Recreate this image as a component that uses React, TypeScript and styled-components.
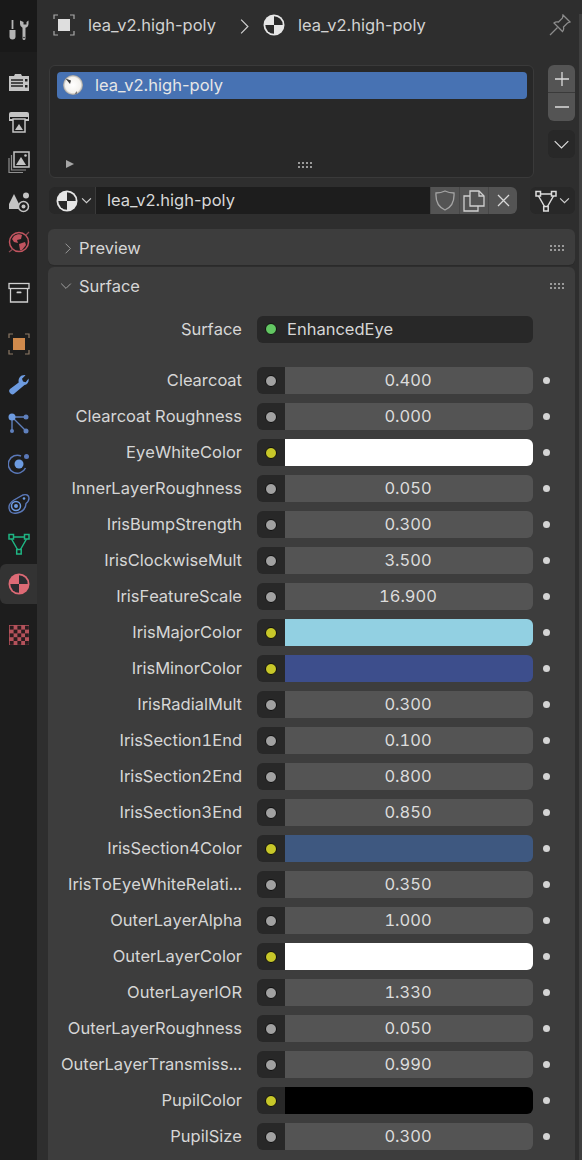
import { ReactNode } from 'react'
import styled, { createGlobalStyle } from 'styled-components'

const GlobalStyle = createGlobalStyle`
  html, body {
    margin: 0;
    padding: 0;
    background: #2e2e2e;
  }
  body {
    font-family: Inter, "Noto Sans", sans-serif;
    color: #d6d6d6;
  }
`

const MaterialBall = ({ size = 22, tint = '#e6e6e6', dark = '#2a2a2a' }: { size?: number; tint?: string; dark?: string }) => (
  <svg width={size} height={size} viewBox="0 0 22 22">
    <circle cx="11" cy="11" r="10.500" fill={tint} />
    <path d="M11 2.300a8.700 8.700 0 0 1 8.700 8.700H11z" fill={dark} />
    <path d="M11 19.700A8.700 8.700 0 0 1 2.300 11H11z" fill={dark} />
  </svg>
)

const ObjectIcon = ({ color = '#a8a8a8', fill = '#dedede' }: { color?: string; fill?: string }) => (
  <svg width="22" height="22" viewBox="0 0 22 22" fill="none" stroke={color} strokeWidth="1.2">
    <path d="M1 5V1h4M17 1h4v4M21 17v4h-4M5 21H1v-4" />
    <rect x="5" y="5" width="12" height="12" fill={fill} stroke="none" />
  </svg>
)

const MeshIcon = ({ color }: { color: string }) => (
  <svg width="22" height="22" viewBox="0 0 22 22" fill="none" stroke={color} strokeWidth="1.500">
    <path d="M5.500 4h11M3.500 6 9.500 16.500M18.500 6 12.500 16.500" />
    <rect x="1" y="1.500" width="4.500" height="4.500" />
    <rect x="16.500" y="1.500" width="4.500" height="4.500" />
    <rect x="8.700" y="16.500" width="4.500" height="4.500" />
  </svg>
)

const Handle = styled.div`
  display: grid;
  grid-template-columns: repeat(4, 2px);
  grid-auto-rows: 2px;
  gap: 2px;
  & > i { background: #9a9a9a; }
`
const GripDots = () => (
  <Handle>
    {Array.from({ length: 8 }).map((_, i) => <i key={i} />)}
  </Handle>
)

const Layout = styled.div`
  display: flex;
  width: 582px;
  height: 1160px;
  overflow: hidden;
  background: #2e2e2e;
`

const Sidebar = styled.nav`
  flex: 0 0 37px;
  background: #1d1d1d;
  display: flex;
  flex-direction: column;
`

const ToolTab = styled.div`
  height: 52px;
  background: #191919;
  display: flex;
  align-items: center;
  justify-content: center;
  padding-top: 8px;
  box-sizing: border-box;
  margin-bottom: 10px;
`

const TabGroup = styled.div`
  display: flex;
  flex-direction: column;
  margin-bottom: 11px;
`

const Tab = styled.div<{ $active?: boolean }>`
  height: 40px;
  display: flex;
  align-items: center;
  justify-content: center;
  background: ${p => (p.$active ? '#333333' : 'transparent')};
  border-radius: ${p => (p.$active ? '6px 0 0 6px' : '0')};
`

const Main = styled.main`
  flex: 1;
  min-width: 0;
  position: relative;
  padding: 0 4px 0 11px;
`

const Scrollbar = styled.div`
  position: absolute;
  top: 14px;
  right: 0;
  bottom: 0;
  width: 3px;
  background: #3f3f3f;
`

const Breadcrumb = styled.header`
  height: 50px;
  display: flex;
  align-items: center;
  padding-left: 5px;
  margin-bottom: 15px;
`

const CrumbText = styled.span`
  font-size: 16.5px;
  color: #d2d2d2;
  margin-left: 13px;
`

const CrumbChevron = styled.span`
  margin: 2px 10px 0 20px;
  display: flex;
`

const Pin = styled.span`
  margin-left: auto;
  margin-right: 7px;
  display: flex;
`

const SlotRow = styled.section`
  display: flex;
  gap: 14px;
  padding-left: 1px;
  margin-bottom: 9px;
`

const SlotList = styled.div`
  width: 485px;
  height: 113px;
  box-sizing: border-box;
  background: #282828;
  border: 1px solid #3a3a3a;
  border-radius: 6px;
  padding: 6px 6px 6px 7px;
  position: relative;
`

const SlotItem = styled.div`
  height: 27px;
  box-sizing: border-box;
  padding: 0 0 2px 6px;
  background: #4772b3;
  border-radius: 4px;
  display: flex;
  align-items: center;
  gap: 12px;
  font-size: 16.5px;
  color: #e6e6e6;
`

const ExpandArrow = styled.span`
  position: absolute;
  left: 16px;
  bottom: 9px;
  width: 0;
  height: 0;
  border-left: 8px solid #a6a6a6;
  border-top: 4px solid transparent;
  border-bottom: 4px solid transparent;
`

const SlotGrip = styled.div`
  position: absolute;
  left: 248px;
  bottom: 9px;
`

const SlotSide = styled.div`
  display: flex;
  flex-direction: column;
  width: 27px;
`

const SideStack = styled.div`
  border-radius: 6px;
  overflow: hidden;
  margin-bottom: 9px;
`

const SideButton = styled.div<{ $dark?: boolean; $divider?: boolean }>`
  width: 27px;
  height: 28px;
  display: flex;
  align-items: center;
  justify-content: center;
  background: ${p => (p.$dark ? '#282828' : '#545454')};
  border-radius: ${p => (p.$dark ? '6px' : '0')};
  box-sizing: border-box;
  border-bottom: ${p => (p.$divider ? '1px solid #3a3a3a' : 'none')};
`

const DataRow = styled.section`
  display: flex;
  align-items: center;
  height: 27px;
  padding-left: 1px;
  margin-bottom: 15px;
`

const BrowseButton = styled.div`
  width: 46px;
  height: 27px;
  box-sizing: border-box;
  background: #282828;
  border-radius: 6px 0 0 6px;
  display: flex;
  align-items: center;
  padding-left: 7px;
  gap: 3px;
`

const NameField = styled.div`
  width: 335px;
  height: 27px;
  box-sizing: border-box;
  background: #1d1d1d;
  border-left: 1px solid #3a3a3a;
  padding: 0 0 2px 11px;
  display: flex;
  align-items: center;
  font-size: 16.5px;
  color: #d8d8d8;
`

const FieldAction = styled.div<{ $last?: boolean }>`
  width: 29px;
  height: 27px;
  background: #545454;
  display: flex;
  align-items: center;
  justify-content: center;
  border-left: 1px solid #474747;
  box-sizing: border-box;
  border-radius: ${p => (p.$last ? '0 6px 6px 0' : '0')};
`

const MeshSelect = styled.div`
  margin-left: 13px;
  width: 45px;
  height: 27px;
  background: #282828;
  border-radius: 6px;
  display: flex;
  align-items: center;
  justify-content: center;
  gap: 2px;
`

const Panel = styled.section<{ $open?: boolean }>`
  background: #3d3d3d;
  border-radius: ${p => (p.$open ? '6px 6px 0 0' : '6px')};
  margin-bottom: 2px;
  box-shadow: 0 1px 0 #2a2a2a;
  width: 527px;
  height: ${p => (p.$open ? '900px' : 'auto')};
`

const PanelHeader = styled.div`
  height: 36px;
  box-sizing: border-box;
  padding: 2px 11px 0 12px;
  display: flex;
  align-items: center;
  font-size: 16.5px;
  color: #d6d6d6;
  gap: 7px;
  & > :last-child { margin-left: auto; }
`

const HeadChevron = styled.span<{ $closed?: boolean }>`
  width: 12px;
  display: flex;
  justify-content: center;
  padding-left: ${p => (p.$closed ? '2px' : '0')};
  margin-right: ${p => (p.$closed ? '-2px' : '0')};
`

const PropertyRow = styled.div<{ $after?: number }>`
  display: grid;
  grid-template-columns: 209px 28px 248px 27px;
  height: 27px;
  align-items: center;
  margin-bottom: ${p => p.$after ?? 9}px;
`

const PropertyLabel = styled.div`
  font-size: 16.5px;
  font-kerning: none;
  font-variant-numeric: tabular-nums;
  text-align: right;
  white-space: nowrap;
  padding: 0 15px 2px 0;
  color: #d6d6d6;
`

const Socket = styled.div`
  height: 27px;
  background: #282828;
  border-radius: 6px 0 0 6px;
  display: flex;
  align-items: center;
  justify-content: center;
`

const SocketDot = styled.span<{ $color: string }>`
  width: 10px;
  height: 10px;
  border-radius: 50%;
  background: ${p => p.$color};
  border: 1.5px solid #0c0c0c;
`

const ValueField = styled.div`
  height: 27px;
  box-sizing: border-box;
  padding: 0 2px 2px 0;
  background: #545454;
  border-radius: 0 6px 6px 0;
  display: flex;
  align-items: center;
  justify-content: center;
  font-size: 16.5px;
  font-variant-numeric: tabular-nums;
  color: #dcdcdc;
`

const ColorField = styled.div<{ $color: string }>`
  height: 27px;
  background: ${p => p.$color};
  border-radius: 0 6px 6px 0;
`

const Keyframe = styled.span`
  justify-self: center;
  width: 7px;
  height: 7px;
  border-radius: 50%;
  background: #d4d4d4;
`

const SurfaceRow = styled(PropertyRow)`
  margin-top: 13px;
`

const ShaderField = styled.div`
  grid-column: 2 / 4;
  height: 27px;
  box-sizing: border-box;
  background: #282828;
  border-radius: 6px;
  display: flex;
  align-items: center;
  font-size: 16.5px;
  color: #d6d6d6;
  padding: 0 0 1px 8px;
  gap: 10px;
`

const ShaderDot = styled.span`
  width: 12px;
  height: 12px;
  border-radius: 50%;
  background: #63c763;
  border: 1px solid #111;
  box-sizing: border-box;
`

const Chevron = ({ dir = 'down', size = 10, color = '#cfcfcf' }: { dir?: 'down' | 'right'; size?: number; color?: string }) => (
  <svg width={size} height={size} viewBox="0 0 10 10" fill="none" stroke={color} strokeWidth={12 / size}>
    {dir === 'down' ? <path d="M1 3l4 4 4-4" /> : <path d="M3 1l4 4-4 4" />}
  </svg>
)

type Prop = { label: string; value?: string; color?: string }

const properties: Prop[] = [
  { label: 'Clearcoat', value: '0.400' },
  { label: 'Clearcoat Roughness', value: '0.000' },
  { label: 'EyeWhiteColor', color: '#ffffff' },
  { label: 'InnerLayerRoughness', value: '0.050' },
  { label: 'IrisBumpStrength', value: '0.300' },
  { label: 'IrisClockwiseMult', value: '3.500' },
  { label: 'IrisFeatureScale', value: '16.900' },
  { label: 'IrisMajorColor', color: '#92d0e2' },
  { label: 'IrisMinorColor', color: '#3d4e8c' },
  { label: 'IrisRadialMult', value: '0.300' },
  { label: 'IrisSection1End', value: '0.100' },
  { label: 'IrisSection2End', value: '0.800' },
  { label: 'IrisSection3End', value: '0.850' },
  { label: 'IrisSection4Color', color: '#3e5880' },
  { label: 'IrisToEyeWhiteRelati...', value: '0.350' },
  { label: 'OuterLayerAlpha', value: '1.000' },
  { label: 'OuterLayerColor', color: '#ffffff' },
  { label: 'OuterLayerIOR', value: '1.330' },
  { label: 'OuterLayerRoughness', value: '0.050' },
  { label: 'OuterLayerTransmiss...', value: '0.990' },
  { label: 'PupilColor', color: '#000000' },
  { label: 'PupilSize', value: '0.300' },
]

const Svg = ({ children }: { children: ReactNode }) => (
  <svg width="22" height="22" viewBox="0 0 22 22">{children}</svg>
)

const ToolIcon = () => (
  <Svg>
    <rect x="3.600" y="1" width="1.800" height="9" fill="#b4b4b4" />
    <path d="M1.500 11h6v6.500a3 3 0 0 1-6 0z" fill="#b4b4b4" />
    <path d="M12 1.500v3.500a4 4 0 0 0 2.500 3.700V19.500a1.500 1.500 0 0 0 3 0V8.700A4 4 0 0 0 20.500 5V1.500l-2 1.500v2.500h-3V3z" fill="#b4b4b4" />
    <circle cx="16" cy="18.500" r=".8" fill="#222" />
  </Svg>
)

const RenderIcon = () => (
  <Svg>
    <path d="M1 5h5l1-2h6l1 2h7v15H1z" fill="#c4c4c4" />
    <path d="M3 9h12M3 12h12M3 15h12" stroke="#222" strokeWidth="1.400" />
    <rect x="17" y="8" width="2.500" height="2.500" fill="#222" />
    <rect x="17" y="14" width="2.500" height="2.500" fill="#222" />
  </Svg>
)

const OutputIcon = () => (
  <Svg>
    <path d="M3 1h16a2 2 0 0 1 2 2v7H1V3a2 2 0 0 1 2-2z" fill="#c4c4c4" />
    <rect x="2" y="6" width="18" height="2" fill="#1d1d1d" />
    <rect x="5" y="8" width="12" height="13" fill="#1d1d1d" stroke="#c4c4c4" strokeWidth="1.500" />
    <path d="M7 19l4-6 4 6z" fill="#c4c4c4" />
  </Svg>
)

const ViewLayerIcon = () => (
  <Svg>
    <rect x="6" y="1" width="15" height="15" fill="none" stroke="#c4c4c4" strokeWidth="1.500" />
    <path d="M8 14l5-8 5 8z" fill="#c4c4c4" />
    <circle cx="17.500" cy="4.500" r="1.300" fill="#c4c4c4" />
    <path d="M3.500 4v15H18M1 7v14.500h14" fill="none" stroke="#8f8f8f" strokeWidth="1.200" />
  </Svg>
)

const SceneIcon = () => (
  <Svg>
    <path d="M6 3l5 10v5H1v-5z" fill="#c4c4c4" />
    <circle cx="18" cy="4.500" r="3" fill="#c4c4c4" />
    <circle cx="15.500" cy="15.500" r="5" fill="#1d1d1d" stroke="#c4c4c4" strokeWidth="1.500" />
    <circle cx="15.500" cy="15.500" r="2" fill="#c4c4c4" />
  </Svg>
)

const WorldIcon = () => (
  <Svg>
    <circle cx="11" cy="11" r="9.500" fill="none" stroke="#c2545f" strokeWidth="1.500" />
    <path d="M6 5c3-2 6-2 8-1l-1 4-4 1 1 3-4-1-2-3zM11 13l6-2 1 3-4 5h-2z" fill="#c2545f" />
    <path d="M1 21 5 18M21 1l-3 3" stroke="#8c4a53" strokeWidth="1.200" />
  </Svg>
)

const CollectionIcon = () => (
  <Svg>
    <rect x="1" y="1.500" width="20" height="5" fill="none" stroke="#d0d0d0" strokeWidth="1.300" />
    <path d="M2.500 6.500V20h17V6.500" fill="none" stroke="#d0d0d0" strokeWidth="1.300" />
    <rect x="8.500" y="9.500" width="5" height="1.800" rx=".9" fill="#d0d0d0" />
  </Svg>
)

const ModifierIcon = () => (
  <Svg>
    <path d="M20.500 5.500c.8 3-1 6-4 6.500L7 20a3.200 3.200 0 1 1-5-4l8.700-6.500C10 6 12 2 16.500 2l1 .2-3.500 3.600 1 2.700 2.700.8 2.500-3.300z" fill="#6d9be0" />
  </Svg>
)

const ParticleIcon = () => (
  <Svg>
    <path d="M4 4h14M4 4l13 13M4 4v14" stroke="#5f80bd" strokeWidth="1.400" />
    <circle cx="4" cy="4" r="3.500" fill="#6d9be0" />
    <circle cx="18" cy="4" r="2.500" fill="#5f80bd" />
    <circle cx="18" cy="18" r="2.500" fill="#5f80bd" />
    <circle cx="4" cy="18" r="2" fill="#5f80bd" />
  </Svg>
)

const PhysicsIcon = () => (
  <Svg>
    <path d="M17.500 15A9 9 0 1 1 13 3" fill="none" stroke="#5a78b8" strokeWidth="1.500" />
    <circle cx="11" cy="11" r="4.500" fill="#6d9be0" />
    <circle cx="18.500" cy="3.500" r="2.500" fill="#5a78b8" />
  </Svg>
)

const ConstraintIcon = () => (
  <Svg>
    <path d="M9 20c-5 1-8-1-8-6 0-3 2-5 5-7l9-5c3-1 6 0 6 3 0 2-1 4-3 5.500 0 4-3 9-9 9.500z" fill="none" stroke="#5a78b8" strokeWidth="1.400" />
    <circle cx="8" cy="13" r="4.500" fill="none" stroke="#6d9be0" strokeWidth="1.500" />
    <circle cx="8" cy="13" r="2" fill="#6d9be0" />
    <circle cx="16" cy="5.500" r="1.300" fill="#6d9be0" />
  </Svg>
)

const TextureIcon = () => (
  <Svg>
    <rect x="1" y="1" width="20" height="20" fill="#b4525b" />
    {[0, 1, 2, 3, 4].map(r =>
      [0, 1, 2, 3, 4].filter(c => (r + c) % 2 === 0).map(c => (
        <rect key={`${r}-${c}`} x={1.800 + c * 3.800} y={1.800 + r * 3.800} width="3.800" height="3.800" fill="#2a1c1e" />
      ))
    )}
  </Svg>
)

const PreviewBall = () => (
  <svg width="20" height="20" viewBox="0 0 20 20">
    <defs>
      <radialGradient id="previewShade" cx="50%" cy="50%" r="55%">
        <stop offset="0%" stopColor="#ffffff" />
        <stop offset="70%" stopColor="#f4f2ee" />
        <stop offset="100%" stopColor="#77736d" />
      </radialGradient>
    </defs>
    <circle cx="10" cy="10" r="10" fill="url(#previewShade)" />
    <path d="M2.500 3.500 8 5.500 7 9z" fill="#3a3a3a" />
    <path d="M12 19l1.500-3 .5 2.500z" fill="#5a5a5a" />
  </svg>
)

const App = () => (
  <>
    <GlobalStyle />
    <Layout>
      <Sidebar>
        <ToolTab><ToolIcon /></ToolTab>
        <TabGroup>
          <Tab><RenderIcon /></Tab>
          <Tab><OutputIcon /></Tab>
          <Tab><ViewLayerIcon /></Tab>
          <Tab><SceneIcon /></Tab>
          <Tab><WorldIcon /></Tab>
        </TabGroup>
        <TabGroup>
          <Tab><CollectionIcon /></Tab>
        </TabGroup>
        <TabGroup>
          <Tab><ObjectIcon color="#8e7a66" fill="#d08a4c" /></Tab>
          <Tab><ModifierIcon /></Tab>
          <Tab><ParticleIcon /></Tab>
          <Tab><PhysicsIcon /></Tab>
          <Tab><ConstraintIcon /></Tab>
          <Tab><MeshIcon color="#1fb583" /></Tab>
          <Tab $active><MaterialBall tint="#dd6a75" dark="#2c2c30" /></Tab>
        </TabGroup>
        <Tab><TextureIcon /></Tab>
      </Sidebar>
      <Main>
        <Scrollbar />
        <Breadcrumb>
          <ObjectIcon />
          <CrumbText>lea_v2.high-poly</CrumbText>
          <CrumbChevron><Chevron dir="right" size={17} /></CrumbChevron>
          <MaterialBall />
          <CrumbText>lea_v2.high-poly</CrumbText>
          <Pin>
            <svg width="22" height="22" viewBox="0 0 22 22" fill="none" stroke="#8c8c8c" strokeWidth="1.300">
              <path d="M14 1l7 7-2.500 1-4 4c.5 2 0 3.500-1 4.500L5 9c1-1 2.500-1.500 4.500-1l4-4z" />
              <path d="M8.500 13.500 1 21" />
            </svg>
          </Pin>
        </Breadcrumb>
        <SlotRow>
          <SlotList>
            <SlotItem>
              <PreviewBall />
              lea_v2.high-poly
            </SlotItem>
            <ExpandArrow />
            <SlotGrip><GripDots /></SlotGrip>
          </SlotList>
          <SlotSide>
            <SideStack>
              <SideButton $divider>
                <svg width="14" height="14" viewBox="0 0 14 14" stroke="#dcdcdc" strokeWidth="1.300"><path d="M7 0v14M0 7h14" /></svg>
              </SideButton>
              <SideButton>
                <svg width="14" height="14" viewBox="0 0 14 14" stroke="#dcdcdc" strokeWidth="1.300"><path d="M0 7h14" /></svg>
              </SideButton>
            </SideStack>
            <SideButton $dark><Chevron size={17} color="#dcdcdc" /></SideButton>
          </SlotSide>
        </SlotRow>
        <DataRow>
          <BrowseButton>
            <MaterialBall />
            <Chevron size={11} />
          </BrowseButton>
          <NameField>lea_v2.high-poly</NameField>
          <FieldAction>
            <svg width="20" height="21" viewBox="0 0 20 21" fill="none" stroke="#a4a4a4" strokeWidth="1.300">
              <path d="M10 1c3 1.500 5.500 2 9 2 .5 8-2 14-9 17C3 17 .5 11 1 3c3.500 0 6-.5 9-2z" />
            </svg>
          </FieldAction>
          <FieldAction>
            <svg width="22" height="22" viewBox="0 0 22 22" fill="none" stroke="#d0d0d0" strokeWidth="1.300">
              <path d="M7 16V1h9l5 5v10z" />
              <path d="M16 1v5h5" />
              <path d="M7 6H1v15h14v-5" />
            </svg>
          </FieldAction>
          <FieldAction $last>
            <svg width="13" height="13" viewBox="0 0 13 13" stroke="#d8d8d8" strokeWidth="1.300"><path d="M1 1l11 11M12 1 1 12" /></svg>
          </FieldAction>
          <MeshSelect>
            <MeshIcon color="#dcdcdc" />
            <Chevron size={11} />
          </MeshSelect>
        </DataRow>
        <Panel>
          <PanelHeader>
            <HeadChevron $closed><Chevron dir="right" size={17} color="#aaaaaa" /></HeadChevron>
            Preview
            <GripDots />
          </PanelHeader>
        </Panel>
        <Panel $open>
          <PanelHeader>
            <HeadChevron><Chevron size={16} color="#aaaaaa" /></HeadChevron>
            Surface
            <GripDots />
          </PanelHeader>
          <SurfaceRow $after={24}>
            <PropertyLabel>Surface</PropertyLabel>
            <ShaderField><ShaderDot />EnhancedEye</ShaderField>
          </SurfaceRow>
          {properties.map(prop => (
            <PropertyRow key={prop.label}>
              <PropertyLabel>{prop.label}</PropertyLabel>
              <Socket><SocketDot $color={prop.color ? '#c7c729' : '#a1a1a1'} /></Socket>
              {prop.color ? <ColorField $color={prop.color} /> : <ValueField>{prop.value}</ValueField>}
              <Keyframe />
            </PropertyRow>
          ))}
        </Panel>
      </Main>
    </Layout>
  </>
)

export default App
